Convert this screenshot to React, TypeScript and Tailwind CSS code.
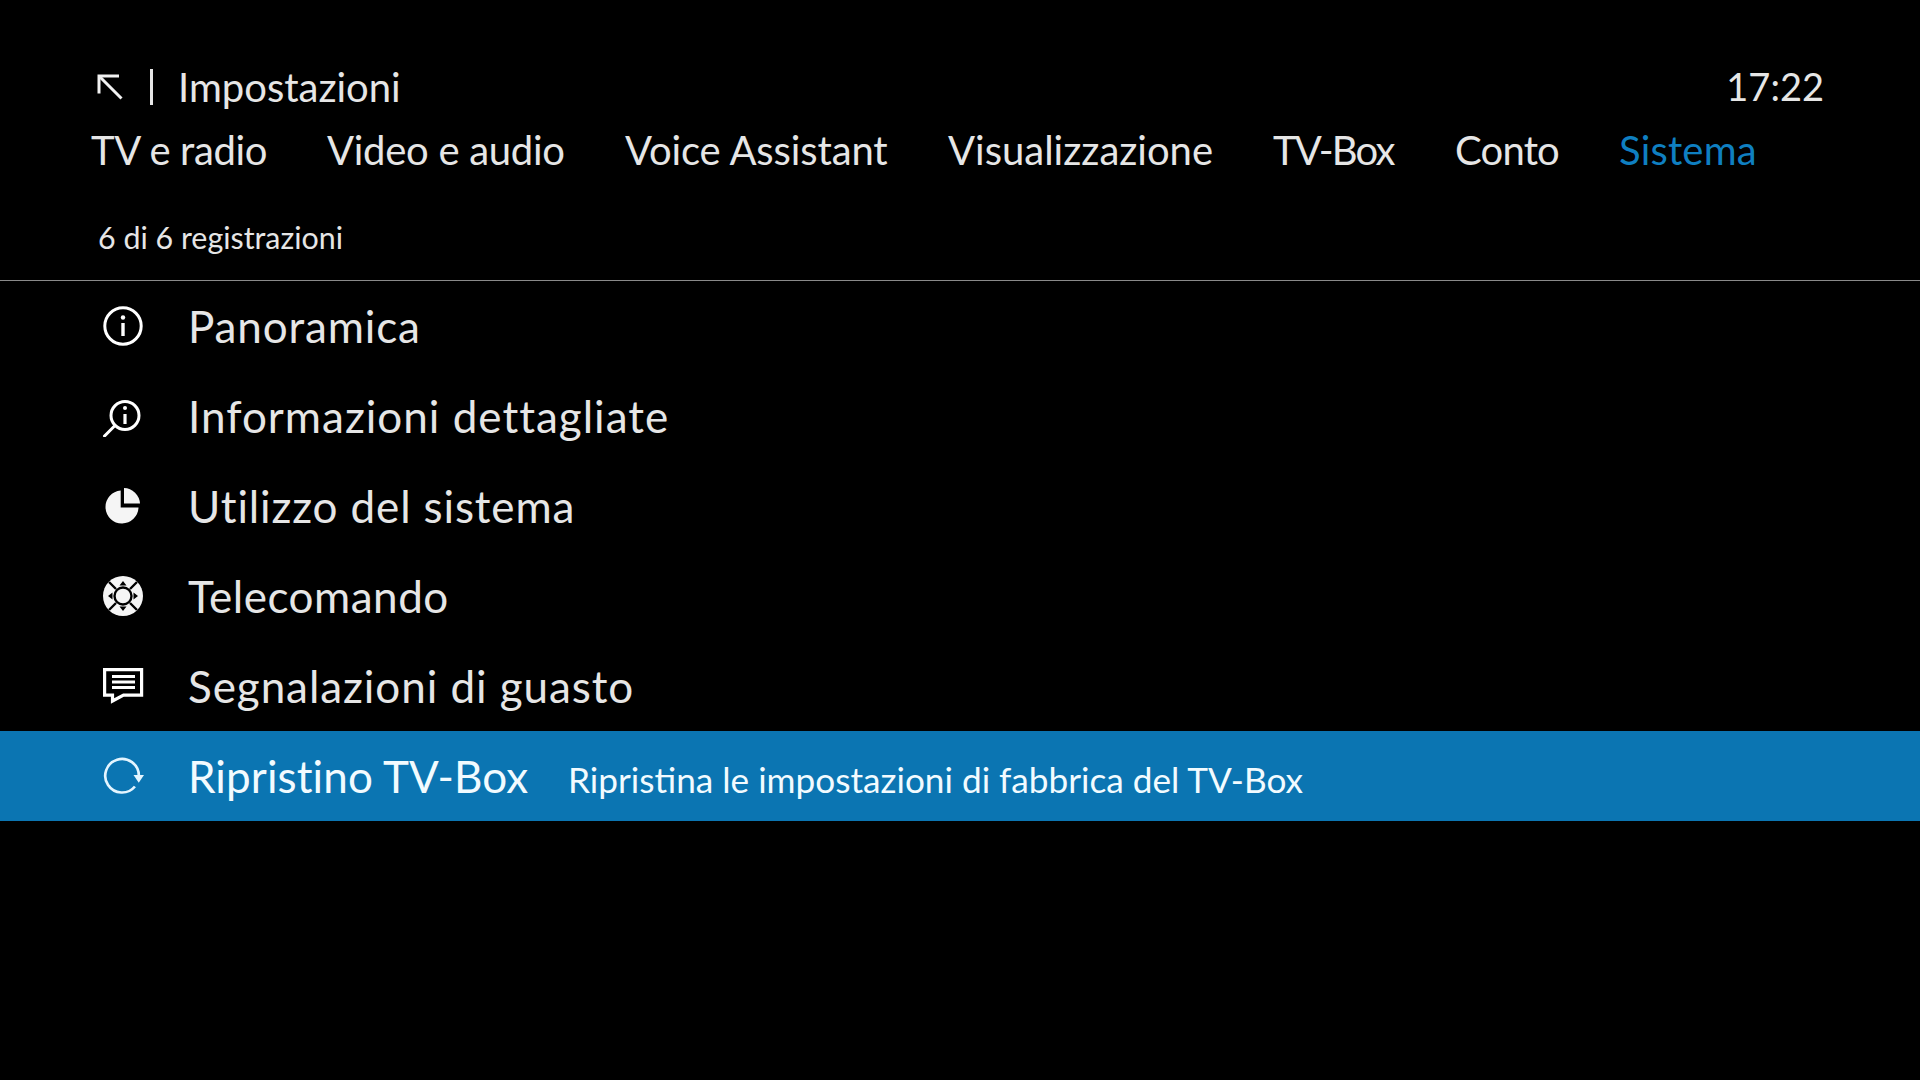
const font = { fontFamily: '"Lato", "Noto Sans", sans-serif' };

function IconBack() {
  return (
    <svg width="27" height="27" viewBox="0 0 27 27" fill="none" stroke="#f2f2f2" strokeWidth="3">
      <path d="M2 19.5V2h20" />
      <path d="M3 3L24.5 24.5" />
    </svg>
  );
}
function IconInfo() {
  return (
    <svg width="42" height="42" viewBox="0 0 42 42" fill="none" stroke="#fff" strokeWidth="3">
      <circle cx="21" cy="21" r="18.2" />
      <path d="M21 18v13" strokeWidth="3.4" />
      <circle cx="21" cy="12.5" r="2.2" fill="#fff" stroke="none" />
    </svg>
  );
}
function IconSearchInfo() {
  return (
    <svg width="42" height="42" viewBox="0 0 42 42" fill="none" stroke="#fff" strokeWidth="3">
      <circle cx="23" cy="20.5" r="14" />
      <path d="M13 30.5L2.5 41" strokeLinecap="round" />
      <path d="M23 19v10" strokeWidth="3.2" />
      <circle cx="23" cy="13" r="2" fill="#fff" stroke="none" />
    </svg>
  );
}
function IconPie() {
  return (
    <svg width="42" height="42" viewBox="0 0 42 42" fill="#f5f5f5">
      <path d="M18.7 5.5A16.5 16.5 0 1 0 36.5 22.5H18.7z" />
      <path d="M22 3A16.5 16.5 0 0 1 38 18.5H22z" />
    </svg>
  );
}
function IconRemote() {
  return (
    <svg width="42" height="42" viewBox="0 0 42 42">
      <circle cx="21" cy="21" r="20" fill="#f5f5f5" />
      <g stroke="#000" strokeWidth="2.4" fill="none">
        <path d="M7 7L14 14M35 7L28 14M7 35L14 28M35 35L28 28" />
        <circle cx="21" cy="21" r="8.5" fill="#f5f5f5" />
      </g>
      <path d="M21 6l3.5 4.5h-7zM21 36l3.5-4.5h-7zM6 21l4.5-3.5v7zM36 21l-4.5-3.5v7z" fill="#000" />
    </svg>
  );
}
function IconMessage() {
  return (
    <svg width="42" height="42" viewBox="0 0 42 42" fill="none" stroke="#fff" strokeWidth="3.2">
      <path d="M2.6 4.6h37v25.5H21.5L10.5 36v-5.9H2.6z" strokeLinejoin="miter" />
      <path d="M10 11.5h23M10 17h23M10 22.5h23" strokeWidth="2.8" />
    </svg>
  );
}
function IconReset() {
  return (
    <svg width="44" height="42" viewBox="0 0 44 42" fill="none" stroke="#e4f5ff" strokeWidth="2.8">
      <path d="M34.5 32A17.6 17.6 0 1 1 38.6 20.5" />
      <path d="M33 20h11l-5.5 8z" fill="#e4f5ff" stroke="none" />
    </svg>
  );
}

const tabs = [
  { label: "TV e radio", w: "w-[236px]", t: "tracking-[-0.37px]" },
  { label: "Video e audio", w: "w-[298px]", t: "tracking-[-0.28px]" },
  { label: "Voice Assistant", w: "w-[323px]", t: "tracking-[-0.12px]" },
  { label: "Visualizzazione", w: "w-[325px]", t: "tracking-[0px]" },
  { label: "TV-Box", w: "w-[182px]", t: "tracking-[-1.85px]" },
  { label: "Conto", w: "w-[164px]", t: "tracking-[-0.8px]" },
];

const rows = [
  { label: "Panoramica", icon: <IconInfo />, t: "tracking-[0.85px]" },
  { label: "Informazioni dettagliate", icon: <IconSearchInfo />, t: "tracking-[1px]" },
  { label: "Utilizzo del sistema", icon: <IconPie />, t: "tracking-[0.87px]" },
  { label: "Telecomando", icon: <IconRemote />, t: "tracking-[0.5px]" },
  { label: "Segnalazioni di guasto", icon: <IconMessage />, t: "tracking-[0.93px]" },
];

export default function App() {
  return (
    <div className="w-[1920px] h-[1080px] bg-black overflow-hidden text-[#e6e6e6]" style={font}>
      <header className="h-[280px] pt-[61px] flex flex-col">
        <div className="flex items-center h-[52px] pl-[97px] pr-[96px]">
          <span className="w-[27px] h-[27px] mr-[26px] flex"><IconBack /></span>
          <span className="w-[3px] h-[36px] bg-[#e6e6e6] mr-[25px]" />
          <span className="text-[40px] leading-[52px]">Impostazioni</span>
          <span className="ml-auto mb-[2px] text-[38px] leading-[52px]">17:22</span>
        </div>
        <nav className="flex items-center h-[60px] pl-[91px] mt-[7px]">
          {tabs.map((t) => (
            <span key={t.label} className={`${t.w} ${t.t} shrink-0 text-[40px] leading-[50px]`}>{t.label}</span>
          ))}
          <span className="text-[40px] leading-[50px] tracking-[0.17px] text-[#0f7fc1]">Sistema</span>
        </nav>
        <div className="pl-[98px] mt-[37px] text-[30.4px] leading-[40px]">6 di 6 registrazioni</div>
      </header>
      <div className="h-px bg-[#8a8a8a]" />
      <ul>
        {rows.map((r) => (
          <li key={r.label} className="h-[90px] flex items-center pl-[102px]">
            <span className="w-[42px] h-[42px] flex mr-[44px]">{r.icon}</span>
            <span className={`${r.t} text-[44px] leading-[56px]`}>{r.label}</span>
          </li>
        ))}
        <li className="h-[90px] flex items-center pl-[102px] bg-[#0b75b2] text-[#f2fbff]">
          <span className="w-[42px] h-[42px] flex mr-[44px]"><IconReset /></span>
          <span className="w-[380px] shrink-0 text-[44px] leading-[56px] tracking-[0.1px]">Ripristino TV-Box</span>
          <span className="mt-[6px] text-[35.2px] leading-[44px]">Ripristina le impostazioni di fabbrica del TV-Box</span>
        </li>
      </ul>
    </div>
  );
}
